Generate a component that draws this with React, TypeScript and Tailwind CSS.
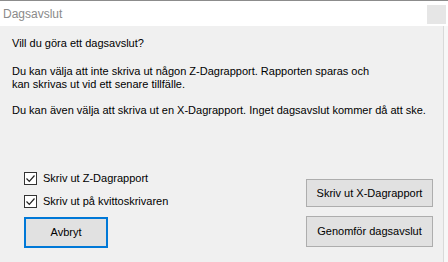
import React from 'react';

const font = { fontFamily: '"Liberation Sans", Arial, sans-serif' };

function Check({ label }: { label: string }) {
  return (
    <label className="flex items-center h-[13px] gap-[6px] text-[11px] text-black whitespace-nowrap">
      <span className="w-[13px] h-[13px] border border-[#333] bg-white flex items-center justify-center">
        <svg width="11" height="11" viewBox="0 0 11 11">
          <path d="M1.5 5.5 L4.3 8.3 L9.5 2.5" fill="none" stroke="#222" strokeWidth="1.2" />
        </svg>
      </span>
      <span>{label}</span>
    </label>
  );
}

function Btn({ children, focused, cls }: { children: React.ReactNode; focused?: boolean; cls: string }) {
  return (
    <button
      className={
        'bg-[#e1e1e1] text-[11px] text-black flex items-center justify-center whitespace-nowrap ' +
        (focused ? 'border-2 border-[#0078d7] ' : 'border border-[#adadad] ') + cls
      }
    >
      {children}
    </button>
  );
}

export default function App() {
  return (
    <div className="w-[448px] h-[262px] bg-[#f0f0f0] border-t border-[#8c8c8c] flex flex-col overflow-hidden" style={font}>
      <div className="h-[25px] bg-white flex items-center justify-between pl-[3px] pr-[2px]">
        <span className="text-[12px] text-[#8a8a8a]">Dagsavslut</span>
        <span className="w-[19px] h-[19px] bg-[#e6e6e6] mt-[2px]" />
      </div>
      <div className="flex-1 flex">
        <div className="w-[444px] border-r border-[#d9d9d9] pl-[12px] pt-[11px] leading-[13px] text-[11px] text-black whitespace-nowrap">
          <p>Vill du göra ett dagsavslut?</p>
          <p className="mt-[15px]">
            Du kan välja att inte skriva ut någon Z-Dagrapport. Rapporten sparas och
            <br />
            kan skrivas ut vid ett senare tillfälle.
          </p>
          <p className="mt-[13px]">Du kan även välja att skriva ut en X-Dagrapport. Inget dagsavslut kommer då att ske.</p>
          <div className="mt-[55px] flex justify-between pr-[10px]">
            <div className="pl-[12px] flex flex-col">
              <Check label="Skriv ut Z-Dagrapport" />
              <div className="mt-[10px]">
                <Check label="Skriv ut på kvittoskrivaren" />
              </div>
              <Btn focused cls="mt-[9px] w-[84px] h-[31px]">Avbryt</Btn>
            </div>
            <div className="pt-[7px] flex flex-col gap-[9px]">
              <Btn cls="w-[127px] h-[28px]">Skriv ut X-Dagrapport</Btn>
              <Btn cls="w-[127px] h-[31px]">Genomför dagsavslut</Btn>
            </div>
          </div>
        </div>
        <div className="flex-1 bg-[#f7f7f7]" />
      </div>
    </div>
  );
}
